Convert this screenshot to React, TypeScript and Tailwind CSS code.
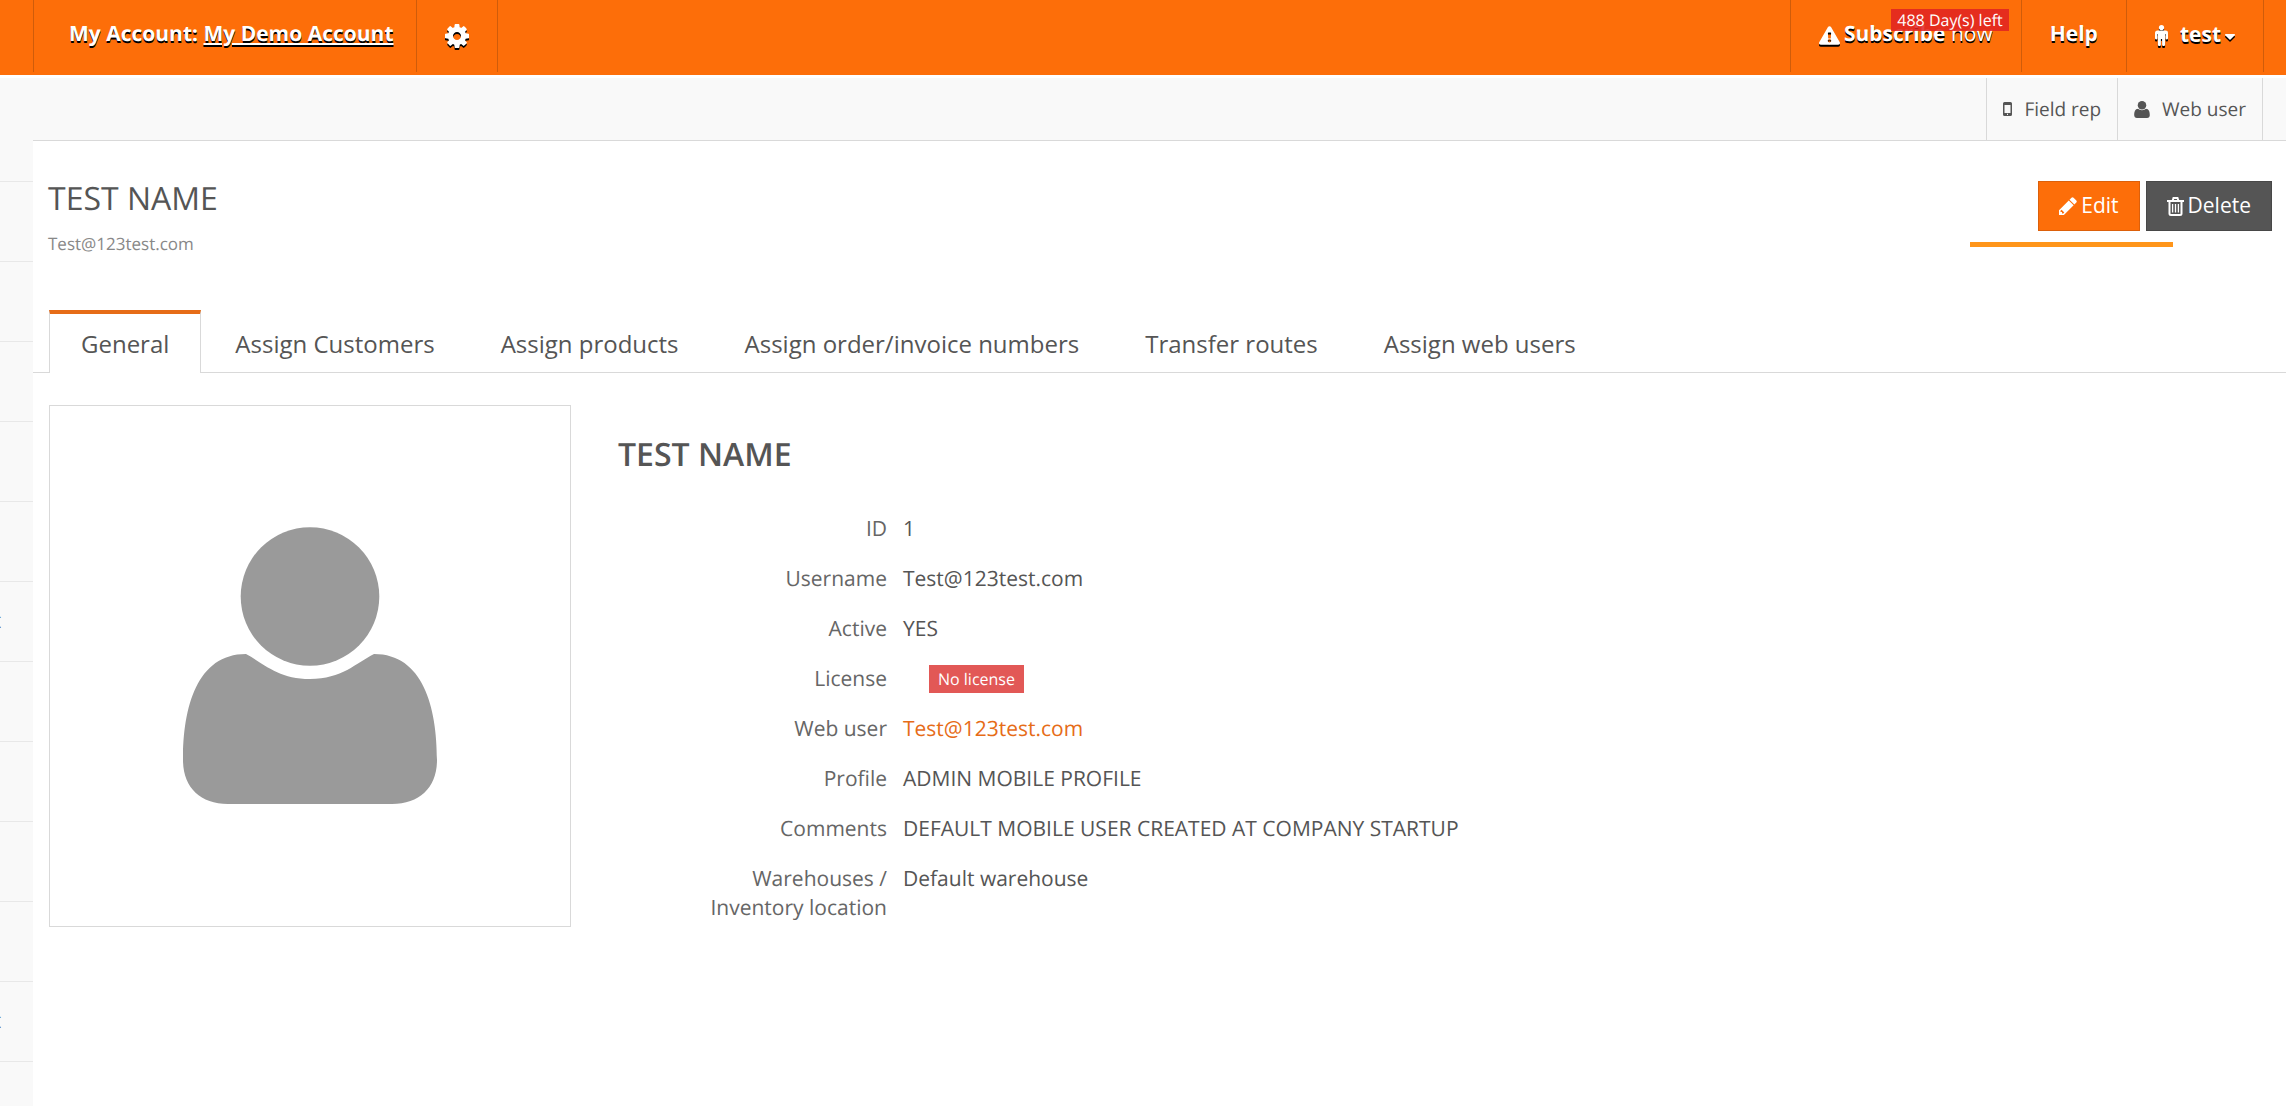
import { FaExclamationTriangle } from "react-icons/fa";
import type { ReactNode } from "react";

const tabs = [
  "General",
  "Assign Customers",
  "Assign products",
  "Assign order/invoice numbers",
  "Transfer routes",
  "Assign web users",
];

const sideItems = ["", "", "", "", "", "", "t", "", "", "", "", "t"];

const details: { label: string; value: ReactNode }[] = [
  { label: "ID", value: "1" },
  { label: "Username", value: "Test@123test.com" },
  { label: "Active", value: "YES" },
  {
    label: "License",
    value: (
      <span className="ml-[26px] block w-fit bg-[#e25856] px-[9px] text-base leading-7 font-medium text-white">
        No license
      </span>
    ),
  },
  {
    label: "Web user",
    value: (
      <a href="#web-user" className="text-[#e66c18]">
        Test@123test.com
      </a>
    ),
  },
  { label: "Profile", value: "ADMIN MOBILE PROFILE" },
  { label: "Comments", value: "DEFAULT MOBILE USER CREATED AT COMPANY STARTUP" },
  { label: "Warehouses / Inventory location", value: "Default warehouse" },
];

function CogIcon() {
  return (
    <svg viewBox="0 0 1536 1536" className="size-6 drop-shadow-[0_2px_0_#000]" fill="currentColor" aria-hidden="true">
      <path d="M1024 768q0-106-75-181t-181-75-181 75-75 181 75 181 181 75 181-75 75-181zm512-109v222q0 12-8 23t-20 13l-185 28q-19 54-39 91 35 50 107 138 10 12 10 25t-9 23q-27 37-99 108t-94 71q-12 0-26-9l-138-108q-44 23-91 38-16 136-29 186-7 28-36 28h-222q-14 0-24.500-8.500t-11.500-21.500l-28-184q-49-16-90-37l-141 107q-10 9-25 9-14 0-25-11-126-114-165-168-7-10-7-23 0-12 8-23 15-21 51-66.500t54-70.500q-27-50-41-99l-183-27q-13-2-21-12.500t-8-23.500v-222q0-12 8-23t19-13l186-28q14-46 39-92-40-57-107-138-10-12-10-24 0-10 9-23 26-36 98.500-107.500t94.500-71.500q13 0 26 10l138 107q44-23 91-38 16-136 29-186 7-28 36-28h222q14 0 24.500 8.500t11.500 21.500l28 184q49 16 90 37l142-107q9-9 24-9 13 0 25 10 129 119 165 170 7 8 7 22 0 12-8 23-15 21-51 66.500t-54 70.500q26 50 41 98l183 28q13 2 21 12.500t8 23.500z" />
    </svg>
  );
}

function MaleIcon() {
  return (
    <svg viewBox="0 0 13 21" className="h-[21px] w-[13px] drop-shadow-[0_2px_0_#000]" fill="currentColor" aria-hidden="true">
      <circle cx="6.500" cy="2.600" r="2.600" />
      <path d="M2.500 5.500h8A2.500 2.500 0 0 1 13 8v5.200a1.200 1.200 0 0 1-2.400 0V9h-.5v10.600a1.400 1.400 0 0 1-3 0V14H5.900v5.600a1.400 1.400 0 0 1-3 0V9h-.5v4.200a1.200 1.200 0 0 1-2.400 0V8a2.500 2.500 0 0 1 2.500-2.500z" />
    </svg>
  );
}

function CaretIcon() {
  return (
    <svg viewBox="0 0 10 6" className="mt-1 h-1.5 w-2.5 drop-shadow-[0_2px_0_#000]" fill="currentColor" aria-hidden="true">
      <path d="M.7 0h8.600a.7.7 0 0 1 .5 1.200L5.500 5.500a.7.7 0 0 1-1 0L.2 1.200A.7.7 0 0 1 .7 0z" />
    </svg>
  );
}

function PencilIcon() {
  return (
    <svg viewBox="0 0 1536 1536" className="size-[18px]" fill="currentColor" aria-hidden="true">
      <path d="M363 1408l91-91-235-235-91 91v107h128v128h107zM832 288l416 416-832 832h-416v-416zm683 96q0 53-37 90l-166 166-416-416 166-165q36-38 90-38 53 0 91 38l235 234q37 39 37 91z" />
    </svg>
  );
}

function PhoneIcon() {
  return (
    <svg viewBox="0 0 9 14" className="h-[14px] w-[9px]" aria-hidden="true">
      <path
        fillRule="evenodd"
        fill="currentColor"
        d="M1.500 0h6A1.500 1.500 0 0 1 9 1.500v11A1.500 1.500 0 0 1 7.500 14h-6A1.500 1.500 0 0 1 0 12.500v-11A1.500 1.500 0 0 1 1.500 0zM1.500 3v8h6V3zM4 11.800v1.200h1v-1.200z"
      />
    </svg>
  );
}

function TrashIcon() {
  return (
    <svg viewBox="0 0 17 19" className="h-[19px] w-[17px]" fill="none" stroke="currentColor" aria-hidden="true">
      <path strokeWidth="2" d="M0 4h17M5.500 4l1-3h4l1 3M2.500 4v12.500a1.500 1.500 0 0 0 1.500 1.500h9a1.500 1.500 0 0 0 1.500-1.500V4" />
      <path strokeWidth="1.300" d="M5.600 7v8.500M8.500 7v8.500M11.400 7v8.500" />
    </svg>
  );
}

function PersonShape({ className, label }: { className: string; label?: string }) {
  return (
    <svg
      viewBox="0 0 254 277"
      className={className}
      fill="currentColor"
      role="img"
      aria-label={label}
      aria-hidden={label ? undefined : true}
    >
      <circle cx="127" cy="69.500" r="69.300" />
      <path d="M63 127C80 136 95 152 127 152S173 136 191 127C240 127 254 180 254 233C254 260 237 277 209 277H45C17 277 0 260 0 233C0 180 14 127 63 127Z" />
    </svg>
  );
}

export default function App() {
  return (
    <div className="flex min-h-screen flex-col overflow-hidden bg-white font-['Open_Sans','Noto_Sans',sans-serif] text-[21px] text-[#555555] [text-rendering:geometricPrecision]">
      <header className="flex h-[75px] items-start justify-between bg-[#fd6e09] px-[22px] font-bold text-white [text-shadow:0_2px_0_#000]">
        <div className="ml-[11px] flex h-[72px] border-x border-[#cf5c0a]">
          <div className="flex items-center border-r border-[#cf5c0a] pr-[22px] pb-0.5 pl-[35px]">
            <span>
              My Account:{" "}
              <a href="#account" className="underline">
                My Demo Account
              </a>
            </span>
          </div>
          <button type="button" aria-label="Settings" className="flex w-20 items-center justify-center">
            <CogIcon />
          </button>
        </div>
        <nav className="flex h-[72px] border-x border-[#cf5c0a]">
          <a href="#subscribe" className="relative flex items-center gap-1 border-r border-[#cf5c0a] px-7 pb-0.5">
            <FaExclamationTriangle className="size-[21px] drop-shadow-[0_2px_0_#000]" />
            <span>
              Subscribe <span className="font-normal">now</span>
            </span>
            <span className="absolute top-[9px] right-3 bg-[#e02222]/85 px-1.5 text-base leading-[22px] font-normal [text-shadow:none]">
              488 Day(s) left
            </span>
          </a>
          <a href="#help" className="flex items-center border-r border-[#cf5c0a] px-7 pb-0.5">
            Help
          </a>
          <button type="button" className="flex items-center px-7 pb-0.5 font-bold [text-shadow:inherit]">
            <MaleIcon />
            <span className="mr-1 ml-3">test</span>
            <CaretIcon />
          </button>
        </nav>
      </header>

      <div className="mt-[3px] flex flex-1 bg-[#f9f9f9]">
        <aside className="w-[33px] shrink-0 pt-6">
          <ul>
            {sideItems.map((item, i) => (
              <li key={i} className="flex h-20 items-center border-b border-[#e8e8e8]">
                <span className="flex w-px justify-end">{item}</span>
              </li>
            ))}
          </ul>
        </aside>

        <div className="flex min-w-0 flex-1 flex-col">
          <nav className="flex h-[63px] justify-end border-b border-[#d9d9d9] pr-[23px] text-[19px]">
            <a href="#field-rep" className="flex items-center border-l border-[#d9d9d9] px-4">
              <PhoneIcon />
              <span className="ml-3">Field rep</span>
            </a>
            <a href="#web-users" className="flex items-center border-x border-[#d9d9d9] px-4">
              <PersonShape className="h-[17px] w-4" />
              <span className="ml-3">Web user</span>
            </a>
          </nav>

          <main className="flex-1 bg-white">
            <div className="flex items-start justify-between pr-[14px] pl-[15px]">
              <div className="pt-9">
                <h1 className="text-[32px] leading-[44px]">TEST NAME</h1>
                <p className="mt-[11px] text-[17px] leading-6 text-[#888888]">Test@123test.com</p>
              </div>
              <div className="relative flex gap-1.5 pt-10 text-white">
                <button type="button" className="flex h-[50px] items-center gap-1 border border-[#dc600a] bg-[#fd6e09] px-5">
                  <PencilIcon />
                  Edit
                </button>
                <button type="button" className="flex h-[50px] items-center gap-1 border border-[#484848] bg-[#555555] px-5">
                  <TrashIcon />
                  Delete
                </button>
                <span className="absolute top-[101px] right-[99px] h-[5px] w-[203px] bg-[#ff951a]" />
              </div>
            </div>

            <div role="tablist" className="mt-[54px] flex border-b border-[#d9d9d9] pl-4 text-2xl">
              {tabs.map((tab, i) => (
                <button
                  key={tab}
                  type="button"
                  role="tab"
                  aria-selected={i === 0}
                  className={
                    i === 0
                      ? "-mb-px h-[63px] border-x border-t-4 border-x-[#d9d9d9] border-t-[#e66c18] bg-white px-[31px]"
                      : "ml-0.5 h-[62px] px-8 pt-[5px]"
                  }
                >
                  {tab}
                </button>
              ))}
            </div>

            <div className="flex items-start px-4 pt-8">
              <div className="flex size-[522px] shrink-0 items-center justify-center border border-[#d9d9d9] pb-0.5">
                <PersonShape className="w-[254px] text-[#9a9a9a]" label="User picture" />
              </div>
              <section className="ml-[47px] flex-1 pt-7">
                <h2 className="text-[32px] leading-[44px] font-semibold">TEST NAME</h2>
                <dl className="mt-[38px] grid grid-cols-[269px_1fr] gap-x-4 gap-y-[21px] leading-[29px]">
                  {details.map((d) => (
                    <div key={d.label} className="contents">
                      <dt className="pl-16 text-right text-[#666666]">{d.label}</dt>
                      <dd>{d.value}</dd>
                    </div>
                  ))}
                </dl>
              </section>
            </div>
          </main>
        </div>
      </div>
    </div>
  );
}
